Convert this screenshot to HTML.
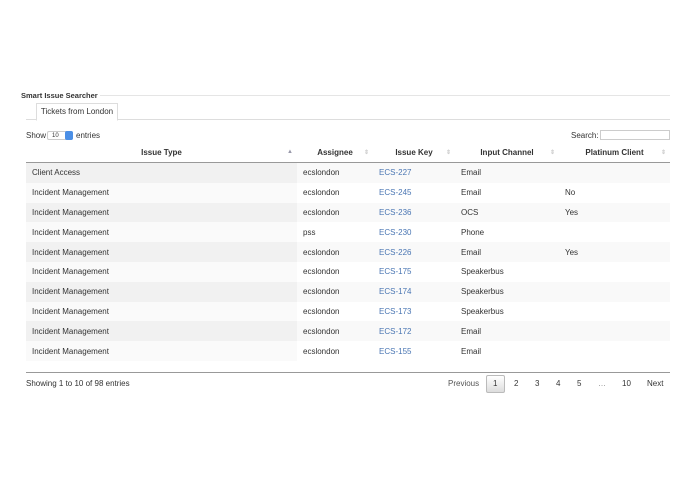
<!DOCTYPE html>
<html><head><style>
body{margin:0;width:695px;height:494px;background:#fff;font-family:"Liberation Sans",sans-serif;font-size:8px;color:#333;position:relative;overflow:hidden}
.a{position:absolute}
table{position:absolute;left:26px;top:143px;width:644px;border-collapse:collapse;table-layout:fixed}
th{height:19px;font-weight:bold;font-size:8px;text-align:center;border-bottom:1px solid #999;padding:0;position:relative}
th span{position:absolute;right:4px;top:6px;color:#ccc;font-size:6px}
td{height:19.8px;padding:0 0 0 6px;white-space:nowrap}
tr.o td{background:#f9f9f9}
tr.o td.s{background:#f1f1f1}
tr.e td.s{background:#fafafa}
a{color:#4a76b3;text-decoration:none}
.pg{position:absolute;top:379px;font-size:8px}
</style></head><body>
<div class="a" style="left:21px;top:91px;font-weight:bold;font-size:7.5px">Smart Issue Searcher</div>
<div class="a" style="left:100px;top:95px;width:570px;border-top:1px solid #e5e5e5"></div>
<div class="a" style="left:26px;top:119px;width:644px;border-top:1px solid #ddd"></div>
<div class="a" style="left:36px;top:103px;width:80px;height:16px;border:1px solid #ddd;border-bottom:1px solid #fff;background:#fff;font-size:8px;line-height:16px;text-align:center">Tickets from London</div>
<div class="a" style="left:26px;top:131px">Show</div>
<div class="a" style="left:47px;top:131px;height:9px;border:1px solid #ccc;font-size:6px;line-height:9px;padding-left:4px;box-sizing:border-box;width:26px;border-radius:2px">10</div>
<div class="a" style="left:65px;top:131px;width:8px;height:9px;background:#4b8fe6;border-radius:2px"></div>
<div class="a" style="left:76px;top:131px">entries</div>
<div class="a" style="left:571px;top:131px">Search:</div>
<div class="a" style="left:600px;top:130px;width:70px;height:10px;border:1px solid #ccc;box-sizing:border-box"></div>
<table>
<colgroup><col style="width:271px"><col style="width:76px"><col style="width:82px"><col style="width:104px"><col style="width:111px"></colgroup>
<tr><th>Issue Type<span style="color:#99a">▲</span></th><th>Assignee<span>⇕</span></th><th>Issue Key<span>⇕</span></th><th>Input Channel<span>⇕</span></th><th>Platinum Client<span>⇕</span></th></tr>
<tr class="o"><td class="s">Client Access</td><td>ecslondon</td><td><a>ECS-227</a></td><td>Email</td><td></td></tr>
<tr class="e"><td class="s">Incident Management</td><td>ecslondon</td><td><a>ECS-245</a></td><td>Email</td><td>No</td></tr>
<tr class="o"><td class="s">Incident Management</td><td>ecslondon</td><td><a>ECS-236</a></td><td>OCS</td><td>Yes</td></tr>
<tr class="e"><td class="s">Incident Management</td><td>pss</td><td><a>ECS-230</a></td><td>Phone</td><td></td></tr>
<tr class="o"><td class="s">Incident Management</td><td>ecslondon</td><td><a>ECS-226</a></td><td>Email</td><td>Yes</td></tr>
<tr class="e"><td class="s">Incident Management</td><td>ecslondon</td><td><a>ECS-175</a></td><td>Speakerbus</td><td></td></tr>
<tr class="o"><td class="s">Incident Management</td><td>ecslondon</td><td><a>ECS-174</a></td><td>Speakerbus</td><td></td></tr>
<tr class="e"><td class="s">Incident Management</td><td>ecslondon</td><td><a>ECS-173</a></td><td>Speakerbus</td><td></td></tr>
<tr class="o"><td class="s">Incident Management</td><td>ecslondon</td><td><a>ECS-172</a></td><td>Email</td><td></td></tr>
<tr class="e"><td class="s">Incident Management</td><td>ecslondon</td><td><a>ECS-155</a></td><td>Email</td><td></td></tr>
</table>
<div class="a" style="left:26px;top:372px;width:644px;border-top:1px solid #999"></div>
<div class="a" style="left:26px;top:379px">Showing 1 to 10 of 98 entries</div>
<div class="a" style="left:486px;top:375px;width:19px;height:18px;border:1px solid #bbb;background:linear-gradient(#fff,#ddd);box-sizing:border-box;border-radius:2px"></div>
<div class="pg" style="left:448px;color:#555">Previous</div>
<div class="pg" style="left:493px">1</div>
<div class="pg" style="left:514px">2</div>
<div class="pg" style="left:535px">3</div>
<div class="pg" style="left:556px">4</div>
<div class="pg" style="left:577px">5</div>
<div class="pg" style="left:598px;color:#888">…</div>
<div class="pg" style="left:622px">10</div>
<div class="pg" style="left:647px">Next</div>
</body></html>
